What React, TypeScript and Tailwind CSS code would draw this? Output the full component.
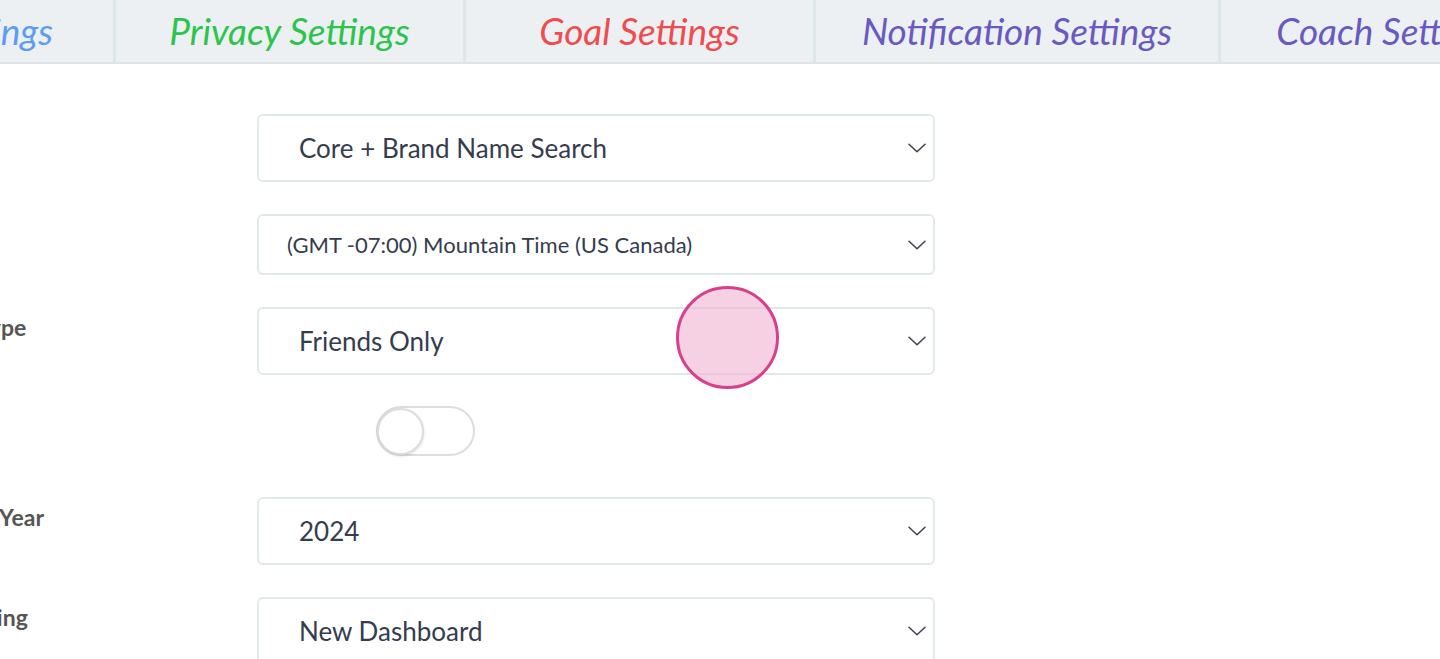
const tabs = [
  { label: "General Settings", color: "text-[#5c9cf2]", w: "w-[116px]", first: true },
  { label: "Privacy Settings", color: "text-[#2cc44c]", w: "w-[350px]" },
  { label: "Goal Settings", color: "text-[#ef4c4f]", w: "w-[350px]" },
  { label: "Notification Settings", color: "text-[#6a59c0]", w: "w-[405px]" },
  { label: "Coach Settings", color: "text-[#6a59c0]", w: "w-[340px]" },
];

function Chevron() {
  return (
    <svg width="18" height="10" viewBox="0 0 18 10" fill="none" className="shrink-0">
      <path d="M1 1.2 9 8.8 17 1.2" stroke="#3a4050" strokeWidth="1.5" strokeLinecap="round" strokeLinejoin="round" />
    </svg>
  );
}

function Select({ value, small, h = "h-[68px]" }: { value: string; small?: boolean; h?: string }) {
  return (
    <div
      className={`flex ${h} w-[678px] shrink-0 items-center justify-between rounded-[6px] border-2 border-[#e1e8ec] bg-white pr-[7px] ${
        small ? "pl-[28px] text-[22px]" : "pl-[40px] text-[26px]"
      } text-[#353c4e]`}
    >
      <span>{value}</span>
      <Chevron />
    </div>
  );
}

function Row({ label, children, className = "" }: { label: string; children: React.ReactNode; className?: string }) {
  return (
    <div className={`flex items-start ${className}`}>
      <div className="ml-[-135px] w-[392px] shrink-0 whitespace-nowrap pt-[6px] text-[23px] leading-[28px] font-bold text-[#555]">
        {label}
      </div>
      {children}
    </div>
  );
}

export default function App() {
  return (
    <div
      className="relative h-[659px] w-[1440px] overflow-hidden bg-white"
      style={{ fontFamily: "Lato, 'Open Sans', sans-serif" }}
    >
      <div className="flex h-[64px] border-b-2 border-[#dfe3e6] bg-[#ecf0f2]">
        {tabs.map((t) => (
          <div
            key={t.label}
            className={`flex shrink-0 items-center whitespace-nowrap border-r-[3px] border-[#dde6eb] ${t.w} ${
              t.first ? "justify-end pr-[60px]" : "justify-center"
            }`}
          >
            <span className={`text-[37px] leading-[44px] italic ${t.color}`}>{t.label}</span>
          </div>
        ))}
      </div>

      <div className="flex flex-col pt-[50px]">
        <Row label="Search">
          <Select value="Core + Brand Name Search" />
        </Row>
        <Row label="Timezone" className="mt-[32px]">
          <Select value="(GMT -07:00) Mountain Time (US Canada)" small h="h-[61px]" />
        </Row>
        <Row label="Diet Share Type" className="mt-[32px]">
          <Select value="Friends Only" />
        </Row>
        <Row label="Units" className="mt-[31px]">
          <div className="ml-[119px] flex h-[50px] w-[99px] items-center rounded-full border-2 border-[#dedede] bg-white">
            <div className="ml-[-1px] h-[47px] w-[47px] rounded-full border-2 border-[#dcdcdc] bg-white shadow-[0_1px_3px_rgba(0,0,0,0.15)]" />
          </div>
        </Row>
        <Row label="Weight Start Year" className="mt-[41px]">
          <Select value="2024" />
        </Row>
        <Row label="Default Landing" className="mt-[32px]">
          <Select value="New Dashboard" />
        </Row>
      </div>

      <div className="absolute left-[676px] top-[286px] h-[103px] w-[103px] rounded-full border-[3px] border-[#d6418c] bg-[#efb3d1]/60" />
    </div>
  );
}
